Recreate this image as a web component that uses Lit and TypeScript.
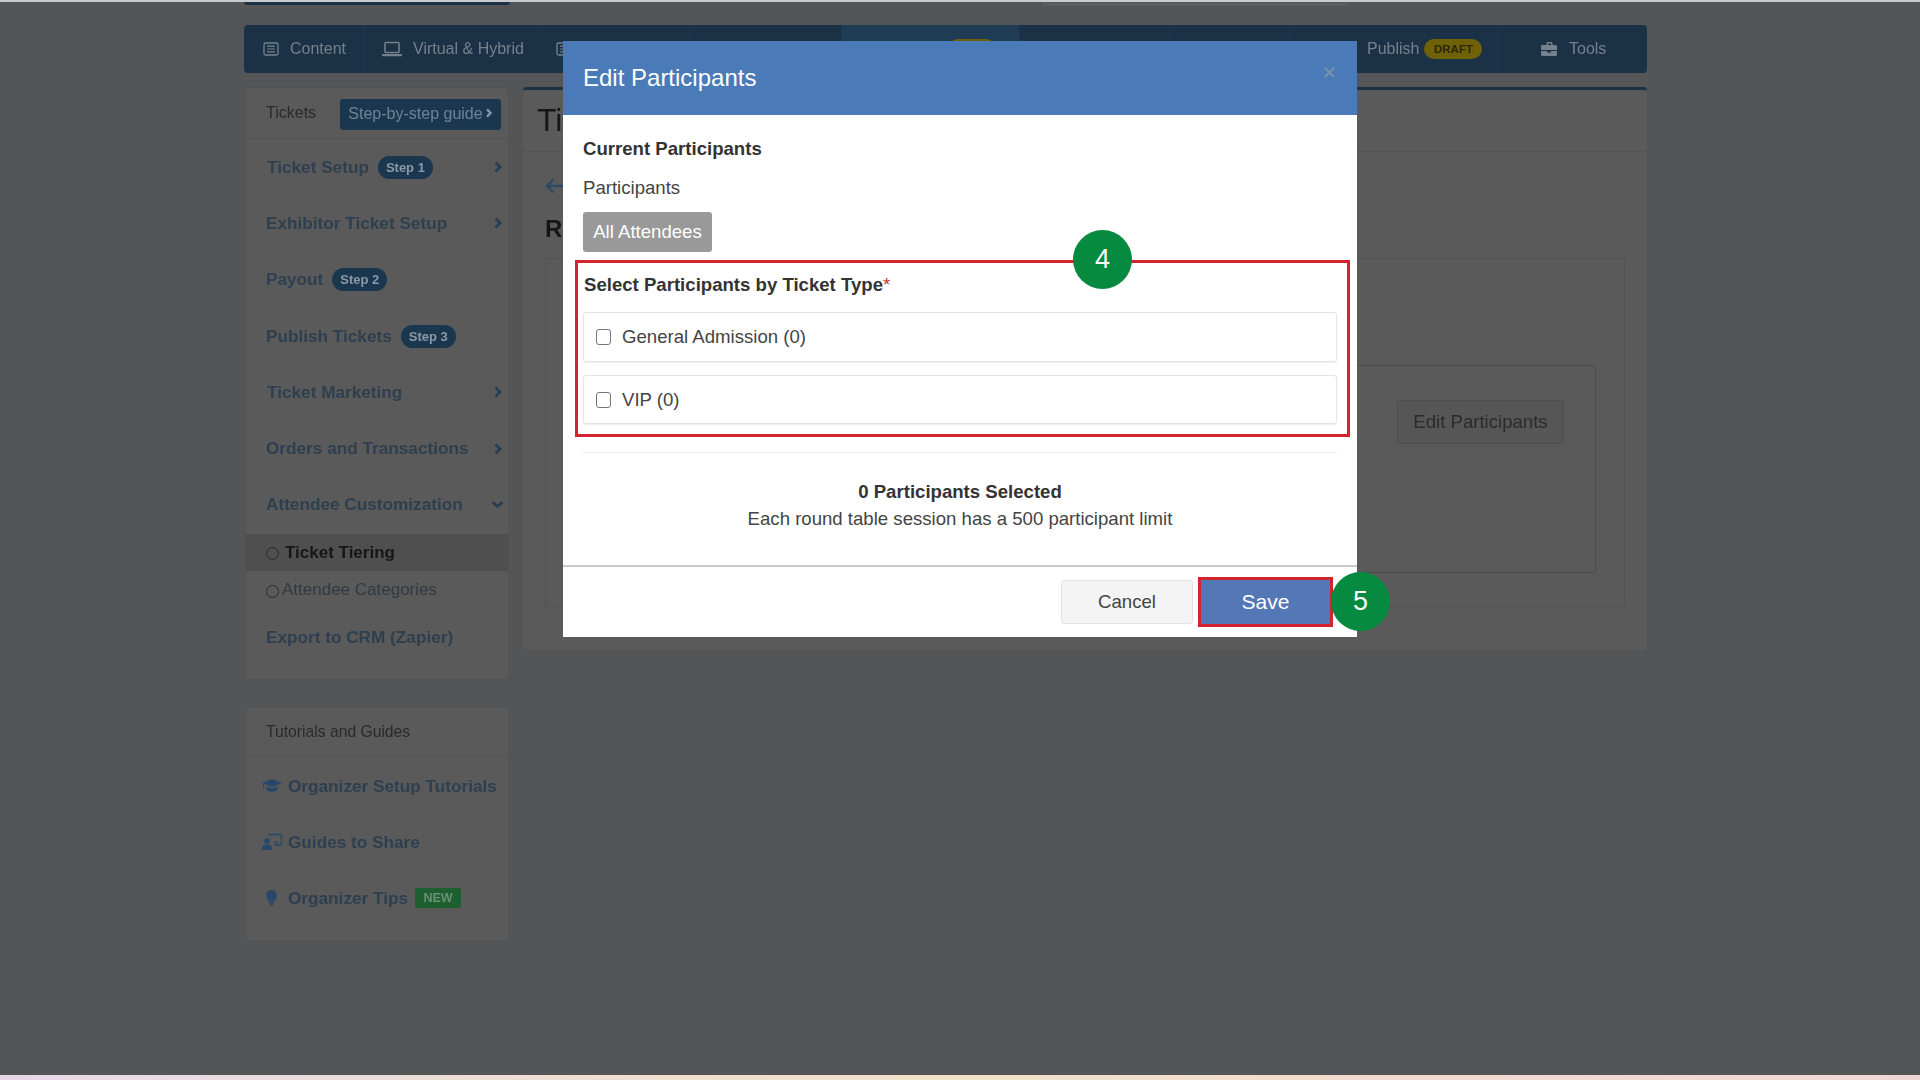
import { LitElement, html, css, svg } from "lit";
import { customElement } from "lit/decorators.js";

const chevron = html`<svg class="chev" viewBox="0 0 10 12"><path d="M2.500 1.500l4.500 4.500-4.500 4.500" fill="none" stroke="currentColor" stroke-width="2.800"/></svg>`;
const chevronDown = html`<svg class="chev down" viewBox="0 0 13 11"><path d="M1.500 3l5 4.500 5-4.500" fill="none" stroke="currentColor" stroke-width="2.800"/></svg>`;

const icons = {
  list: svg`<rect x="1" y="2" width="14" height="12" rx="1.5" fill="none" stroke="currentColor" stroke-width="1.3"/><path d="M4 5.2h8M4 8h8M4 10.8h8" stroke="currentColor" stroke-width="1.2"/>`,
  laptop: svg`<rect x="3" y="1.5" width="14" height="10" rx="1" fill="none" stroke="currentColor" stroke-width="1.6"/><path d="M0 13h20v1.2a1 1 0 0 1-1 1H1a1 1 0 0 1-1-1z" fill="currentColor"/>`,
  tools: svg`<path d="M5.5 4V2.6C5.500 1.700 6.200 1 7 1h3c.8 0 1.500.7 1.500 1.600V4h-1.400V2.400H6.900V4z" fill="currentColor"/><path d="M0 5.500C0 4.700.6 4 1.400 4h13.200c.8 0 1.400.7 1.400 1.500V9H0zM0 10h6v1.500h4V10h6v3.500c0 .8-.6 1.500-1.400 1.500H1.400C.6 15 0 14.300 0 13.500z" fill="currentColor"/>`,
  cap: svg`<path d="M10 2L0 6l10 4 10-4z" fill="currentColor"/><path d="M4.500 9.300v3c0 1.300 2.500 2.400 5.500 2.400s5.500-1.100 5.500-2.400v-3L10 11.500z" fill="currentColor"/><path d="M1.500 7v5" stroke="currentColor" stroke-width="1"/>`,
  board: svg`<path d="M6 1.500h12.500a1 1 0 0 1 1 1V11a1 1 0 0 1-1 1h-6" fill="none" stroke="currentColor" stroke-width="1.400"/><path d="M12 9.500h4" stroke="currentColor" stroke-width="1.400"/><circle cx="5" cy="8" r="2.800" fill="currentColor"/><path d="M0 16c0-2.800 1.800-4.500 4-4.500h2c2.200 0 4 1.700 4 4.500v1H0z" fill="currentColor"/>`,
  bulb: svg`<path d="M6.500 1C3.400 1 1 3.300 1 6.300c0 2.600 2 3.800 2.500 6.200h6C10 10.100 12 8.900 12 6.300 12 3.300 9.600 1 6.500 1z" fill="currentColor"/><path d="M4 14h5M4.800 16h3.400" stroke="currentColor" stroke-width="1.500"/>`,
};

@customElement("app-root")
export class AppRoot extends LitElement {
  static styles = css`
    :host { display: block; font-family: "Liberation Sans", Arial, sans-serif; }
    * { box-sizing: border-box; }
    .page { position: relative; width: 1920px; height: 1080px; overflow: hidden; background: #545556; display: flex; flex-direction: column; align-items: flex-start; }
    .topline { width: 100%; height: 2px; background: #c9cbcc; flex: none; }
    .topstub { width: 100%; height: 3px; flex: none; display: flex; padding-left: 244px; }
    .stubdark { width: 266px; height: 3px; background: #1a3146; border-radius: 0 0 4px 4px; }
    .stubline { width: 304px; height: 3px; margin-left: 533px; border: 1px solid #666; border-top: 0; border-radius: 0 0 3px 3px; }
    .shell { margin: 20px 0 0 244px; width: 1403px; flex: none; filter: blur(0.5px); }
    .nav { height: 48px; background: #1a3146; border-radius: 4px; display: flex; color: #76818c; font-size: 16px; }
    .tab { display: flex; align-items: center; border-right: 1px solid #1e3750; flex: none; }
    .tab svg { display: block; margin-right: 11px; }
    .t1 { width: 121px; padding-left: 19px; }
    .t2 { width: 174px; padding-left: 17px; }
    .t3 { width: 151px; padding-left: 17px; }
    .t4 { width: 152px; }
    .t5 { width: 178px; padding-left: 106px; background: #203c55; }
    .peek { width: 48px; height: 20px; background: #6e6108; border-radius: 10px 10px 0 0; }
    .t6 { width: 150px; }
    .t7 { width: 120px; }
    .pub { width: 208px; padding-left: 77px; }
    .draft { margin-left: 5px; width: 58px; height: 20px; background: #6e6108; color: #2b2705; border-radius: 10px; font-size: 11.500px; font-weight: 700; display: flex; align-items: center; justify-content: center; }
    .tools { width: 149px; padding-left: 43px; border-right: 0; }
    .tools svg { margin-right: 12px; }

    .cols { display: flex; gap: 14px; margin-top: 14px; align-items: flex-start; }
    .left { width: 264px; margin-left: 1px; flex: none; display: flex; flex-direction: column; gap: 27px; }
    .card { background: #5a5a5a; border: 1px solid #535353; border-radius: 4px; }
    .shead { height: 51px; border-bottom: 1px solid #535353; display: flex; align-items: center; justify-content: space-between; padding: 0 7px 0 20px; color: #2a2a2a; font-size: 16px; }
    .guide { width: 161px; height: 31px; background: #1b3750; color: #6f8296; border-radius: 3px; display: flex; align-items: center; justify-content: center; gap: 2px; font-size: 16px; margin-top: 2px; }
    .guide .chev { width: 8px; height: 10px; color: #8a99a8; margin: 0 0 2px; }
    .menu { padding-bottom: 14px; }
    .item { height: 56.300px; display: flex; align-items: center; padding: 0 5px 0 20px; font-size: 17.200px; font-weight: 700; color: #2e3f50; }
    .item span.label { flex: none; }
    .item.first { padding-left: 21px; }
    .badge { margin-left: 9px; height: 23px; width: 55px; border-radius: 12px; background: #1b3750; color: #8c99a6; font-size: 13px; display: flex; align-items: center; justify-content: center; }
    .chev { width: 10px; height: 12px; margin-left: auto; color: #2a3c50; flex: none; }
    .chev.down { width: 13px; height: 11px; margin-right: -1px; }
    .sub { display: flex; align-items: center; padding-left: 20px; font-size: 17px; color: #2f3a44; }
    .sub .dot { width: 13px; height: 13px; border: 1.500px solid #2a2a2a; border-radius: 50%; flex: none; margin-right: 3px; margin-top: 3px; }
    .sub.on { height: 37px; margin-top: 1px; background: #4f4f4f; color: #161616; font-weight: 700; font-size: 17px; }
    .sub.on .dot { margin-right: 6px; margin-top: 2px; }
    .sub.off { height: 38px; }
    .gitem { height: 56px; display: flex; align-items: center; padding-left: 16px; font-size: 17.200px; font-weight: 700; color: #2e3f50; }
    .gitem svg { color: #29476a; width: 20px; height: 18px; flex: none; margin-right: 6px; }
    .new { margin-left: 7px; width: 46px; height: 20px; background: #1e5f30; color: #6a8f76; font-size: 12.500px; border-radius: 2px; display: flex; align-items: center; justify-content: center; }
    .ghead { height: 49px; border-bottom: 1px solid #535353; display: flex; align-items: center; padding-left: 20px; font-size: 15.700px; color: #2a2a2a; }
    .gbody { height: 183px; padding-top: 1px; }

    .main { width: 1124px; height: 563px; border-top: 3px solid #1a3146; border-radius: 4px; background: #5a5a5a; box-shadow: 0 0 0 1px #535353; flex: none; }
    .mhead { height: 62px; border-bottom: 1px solid #535353; padding-left: 14px; font-size: 32px; color: #161616; display: flex; align-items: center; }
    .mbody { padding: 0 22px; }
    .back { height: 63px; padding-top: 5px; display: flex; align-items: center; color: #2c4a68; }
    .rhead { font-size: 24px; font-weight: 700; color: #161616; height: 28px; line-height: 28px; }
    .panel { margin-top: 15px; height: 349px; border: 1px solid #535353; padding: 106px 28px 33px 25px; }
    .inner { height: 208px; border: 1px solid #4b4b4b; border-radius: 3px; display: flex; justify-content: flex-end; padding: 34px 31px 0 0; }
    .editbtn { width: 167px; height: 44px; background: #565656; border: 1px solid #4e4e4e; border-radius: 3px; color: #2b2b2b; font-size: 18.600px; display: flex; align-items: center; justify-content: center; }

    .bottom { position: absolute; left: 0; right: 0; bottom: 0; height: 5px; background: linear-gradient(90deg, #e7d8e8, #efdfd2 30%, #f0e2c8 50%, #f2d9d2 80%, #eed8d6); }

    .modal { position: absolute; left: 563px; top: 41px; width: 794px; height: 596px; background: #fff; display: flex; flex-direction: column; color: #333; }
    .mtitle { height: 74px; background: #4a7ab8; color: #fff; font-size: 24px; display: flex; align-items: center; justify-content: space-between; padding: 0 21px 0 20px; flex: none; }
    .close { color: #7c8fa8; margin-top: -11px; display: block; }
    .mcontent { flex: 1; padding: 23px 20px 0 20px; font-size: 18.600px; }
    .h { font-weight: 700; line-height: 22px; }
    .redbox .h { margin-left: 1px; }
    .plabel { line-height: 22px; margin-top: 17px; color: #444; }
    .pill { margin-top: 13px; width: 129px; height: 40px; background: #999; color: #fff; border-radius: 3px; display: flex; align-items: center; justify-content: center; }
    .redbox { margin: 8px -13px 0 -8px; border: 3px solid #d2232e; padding: 11px 10px 10px 5px; }
    .req { color: #c0392b; font-weight: 400; }
    .row { border: 1px solid #e4e4e4; border-radius: 3px; display: flex; align-items: center; padding-left: 12px; color: #444; box-shadow: 0 1px 1px #eee; }
    .row.a { height: 50px; margin-top: 16px; }
    .row.b { height: 49px; margin-top: 13px; }
    .cb { width: 15px; height: 16px; border: 1.500px solid #767676; border-radius: 3px; margin-right: 11px; flex: none; }
    .sep { height: 1px; background: #ececec; margin-top: 15px; }
    .summary { text-align: center; margin-top: 27px; line-height: 24px; color: #444; }
    .summary b { display: block; color: #333; margin-bottom: 3px; }
    .foot { height: 72px; flex: none; border-top: 2px solid #c9c9c9; display: flex; justify-content: flex-end; align-items: center; padding-right: 24px; gap: 5px; }
    .cancel { width: 132px; height: 44px; background: #f4f4f4; border: 1px solid #e2e2e2; border-radius: 3px; color: #444; font-size: 18.600px; display: flex; align-items: center; justify-content: center; }
    .save { width: 135px; height: 50px; background: #5478b5; border: 3px solid #d2232e; color: #fff; font-size: 21px; display: flex; align-items: center; justify-content: center; }
    .step { position: absolute; width: 59px; height: 59px; border-radius: 50%; background: #058a3f; color: #fff; font-size: 27px; display: flex; align-items: center; justify-content: center; }
    .s4 { left: 1073px; top: 230px; }
    .s5 { left: 1331px; top: 572px; }
  `;

  private ic(name: keyof typeof icons, w: number, h: number, vb: string) {
    return html`<svg width=${w} height=${h} viewBox=${vb}>${icons[name]}</svg>`;
  }

  render() {
    return html`
      <div class="page">
        <div class="topline"></div>
        <div class="topstub"><div class="stubdark"></div><div class="stubline"></div></div>
        <div class="shell">
          <div class="nav">
            <div class="tab t1">${this.ic("list", 16, 16, "0 0 16 16")}Content</div>
            <div class="tab t2">${this.ic("laptop", 20, 16, "0 0 20 16")}Virtual &amp; Hybrid</div>
            <div class="tab t3">${this.ic("list", 16, 16, "0 0 16 16")}</div>
            <div class="tab t4"></div>
            <div class="tab t5"><span class="peek"></span></div>
            <div class="tab t6"></div>
            <div class="tab t7"></div>
            <div class="tab pub">Publish<span class="draft">DRAFT</span></div>
            <div class="tab tools">${this.ic("tools", 16, 16, "0 0 16 16")}Tools</div>
          </div>
          <div class="cols">
            <div class="left">
              <div class="card">
                <div class="shead"><span>Tickets</span><span class="guide">Step-by-step guide ${chevron}</span></div>
                <div class="menu">
                  <div class="item first"><span class="label">Ticket Setup</span><span class="badge">Step 1</span>${chevron}</div>
                  <div class="item"><span class="label">Exhibitor Ticket Setup</span>${chevron}</div>
                  <div class="item"><span class="label">Payout</span><span class="badge">Step 2</span></div>
                  <div class="item"><span class="label">Publish Tickets</span><span class="badge">Step 3</span></div>
                  <div class="item first"><span class="label">Ticket Marketing</span>${chevron}</div>
                  <div class="item"><span class="label">Orders and Transactions</span>${chevron}</div>
                  <div class="item"><span class="label">Attendee Customization</span>${chevronDown}</div>
                  <div class="sub on"><span class="dot"></span>Ticket Tiering</div>
                  <div class="sub off"><span class="dot"></span>Attendee Categories</div>
                  <div class="item"><span class="label">Export to CRM (Zapier)</span></div>
                </div>
              </div>
              <div class="card">
                <div class="ghead">Tutorials and Guides</div>
                <div class="gbody">
                  <div class="gitem"><svg viewBox="0 0 20 18">${icons.cap}</svg>Organizer Setup Tutorials</div>
                  <div class="gitem"><svg viewBox="0 0 20 18">${icons.board}</svg>Guides to Share</div>
                  <div class="gitem"><svg viewBox="-3 0 20 18">${icons.bulb}</svg>Organizer Tips<span class="new">NEW</span></div>
                </div>
              </div>
            </div>
            <div class="main">
              <div class="mhead">Ti</div>
              <div class="mbody">
                <div class="back"><svg width="18" height="16" viewBox="0 0 18 16"><path d="M8.500 1.500L2 8l6.500 6.500M2 8h16" fill="none" stroke="currentColor" stroke-width="2.400"/></svg></div>
                <div class="rhead">R</div>
                <div class="panel"><div class="inner"><div class="editbtn">Edit Participants</div></div></div>
              </div>
            </div>
          </div>
        </div>
        <div class="bottom"></div>

        <div class="modal">
          <div class="mtitle"><span>Edit Participants</span>
            <svg class="close" width="13" height="13" viewBox="0 0 13 13"><path d="M2 2l9 9M11 2l-9 9" stroke="currentColor" stroke-width="2.200"/></svg>
          </div>
          <div class="mcontent">
            <div class="h">Current Participants</div>
            <div class="plabel">Participants</div>
            <div class="pill">All Attendees</div>
            <div class="redbox">
              <div class="h">Select Participants by Ticket Type<span class="req">*</span></div>
              <div class="row a"><span class="cb"></span>General Admission (0)</div>
              <div class="row b"><span class="cb"></span>VIP (0)</div>
            </div>
            <div class="sep"></div>
            <div class="summary"><b>0 Participants Selected</b>Each round table session has a 500 participant limit</div>
          </div>
          <div class="foot">
            <div class="cancel">Cancel</div>
            <div class="save">Save</div>
          </div>
        </div>
        <div class="step s4">4</div>
        <div class="step s5">5</div>
      </div>
    `;
  }
}
